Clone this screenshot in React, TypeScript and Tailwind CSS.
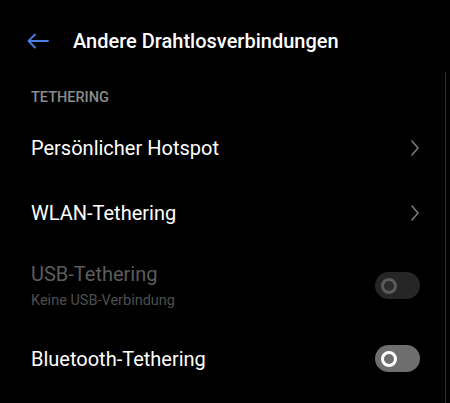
import React from 'react';

const Chevron = () => (
  <svg width="10" height="18" viewBox="0 0 10 18" fill="none" stroke="#7a7a7a" strokeWidth={1.6} strokeLinecap="round" strokeLinejoin="round">
    <path d="M2 2l6 7-6 7" />
  </svg>
);

const Toggle = ({ disabled }: { disabled?: boolean }) => (
  <div
    className={`w-[45px] h-[27px] rounded-full flex items-center pl-[6px] ${disabled ? 'bg-[#262626]' : 'bg-[#6e6e6e]'}`}
  >
    <div
      className={`w-[16px] h-[16px] rounded-full border-[3.5px] ${
        disabled ? 'border-[#5a5a5a] bg-[#2c2c2c]' : 'border-white bg-[#6e6e6e]'
      }`}
    />
  </div>
);

export default function App() {
  return (
    <div className="w-[450px] h-[403px] bg-black relative overflow-hidden" style={{ fontFamily: 'Roboto, "Noto Sans", sans-serif' }}>
      <div className="h-[82px] flex items-center pl-[27px]">
        <svg width="22" height="16" viewBox="0 0 22 16" fill="none" stroke="#4a7fe3" strokeWidth={1.8} strokeLinecap="round" strokeLinejoin="round">
          <path d="M21 8H2M8 1.5L1.5 8 8 14.5" />
        </svg>
        <h1 className="ml-[24px] text-[20px] font-medium text-white leading-none">Andere Drahtlosverbindungen</h1>
      </div>

      <div className="h-[33px] pt-[8px] pl-[31px]">
        <p className="text-[14.5px] leading-[16px] font-medium text-[#8c8c8c]">TETHERING</p>
      </div>

      <div className="h-[65px] flex items-center justify-between pl-[31px] pr-[30px]">
        <span className="text-[20px] text-white">Persönlicher Hotspot</span>
        <Chevron />
      </div>

      <div className="h-[65px] flex items-center justify-between pl-[31px] pr-[30px]">
        <span className="text-[20px] text-white">WLAN-Tethering</span>
        <Chevron />
      </div>

      <div className="h-[81px] flex items-center justify-between pl-[31px] pr-[30px]">
        <div className="flex flex-col gap-[5px]">
          <span className="text-[20px] leading-[26px] text-[#5c5c5c]">USB-Tethering</span>
          <span className="text-[14.5px] leading-[18px] text-[#4e4e4e]">Keine USB-Verbindung</span>
        </div>
        <Toggle disabled />
      </div>

      <div className="h-[65px] flex items-center justify-between pl-[31px] pr-[30px]">
        <span className="text-[20px] text-white">Bluetooth-Tethering</span>
        <Toggle />
      </div>

      <div className="absolute right-[4px] top-[72px] bottom-0 w-px bg-[#2e2e2e]" />
    </div>
  );
}
